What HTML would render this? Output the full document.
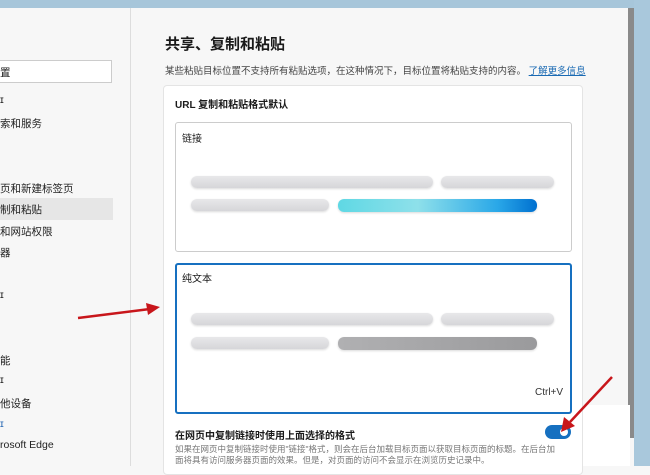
<!DOCTYPE html>
<html><head><meta charset="utf-8"><style>
*{margin:0;padding:0;box-sizing:border-box}
body{width:650px;height:466px;overflow:hidden;background:#f7f7f7;font-family:"Liberation Sans","Noto Sans CJK SC",sans-serif;position:relative;color:#1a1a1a}
.a{position:absolute}
.side{font-size:10.5px;color:#222;left:0}
.bar{position:absolute;height:12px;border-radius:6px;background:linear-gradient(#e8e8ea,#d6d6d9);box-shadow:0 1px 2px rgba(0,0,0,.15)}
</style></head><body>
<div class="a" style="left:0;top:0;width:650px;height:8px;background:#a7c6da"></div>
<div class="a" style="left:634px;top:0;width:16px;height:466px;background:#a9c8dc"></div>
<div class="a" style="left:628px;top:8px;width:6px;height:430px;background:#8a8a8a"></div>
<div class="a" style="left:130px;top:8px;width:1px;height:458px;background:#ddd"></div>
<div class="a" style="left:-2px;top:60px;width:114px;height:23px;background:#fff;border:1px solid #ccc"></div>
<div class="a side" style="top:65px">置</div>
<div class="a side" style="top:94px">ɪ</div>
<div class="a side" style="top:116px">索和服务</div>
<div class="a" style="left:0;top:198px;width:113px;height:22px;background:#e6e6e6"></div>
<div class="a side" style="top:181px">页和新建标签页</div>
<div class="a side" style="top:202px">制和粘贴</div>
<div class="a side" style="top:224px">和网站权限</div>
<div class="a side" style="top:245px">器</div>
<div class="a side" style="top:289px">ɪ</div>
<div class="a side" style="top:353px">能</div>
<div class="a side" style="top:374px">ɪ</div>
<div class="a side" style="top:396px">他设备</div>
<div class="a side" style="top:418px;color:#2a6ab5">ɪ</div>
<div class="a side" style="top:439px">rosoft Edge</div>

<div class="a" style="left:165px;top:33px;font-size:15px;font-weight:bold">共享、复制和粘贴</div>
<div class="a" style="left:165px;top:63px;font-size:9.5px;color:#444">某些粘贴目标位置不支持所有粘贴选项，在这种情况下，目标位置将粘贴支持的内容。 <span style="color:#1a6ab3;text-decoration:underline">了解更多信息</span></div>
<div class="a" style="left:163px;top:85px;width:420px;height:390px;background:#fff;border:1px solid #e4e4e4;border-radius:4px"></div>
<div class="a" style="left:175px;top:96px;font-size:10px;font-weight:bold">URL 复制和粘贴格式默认</div>
<div class="a" style="left:175px;top:122px;width:397px;height:130px;border:1px solid #ccc;border-radius:3px"></div>
<div class="a" style="left:182px;top:130px;font-size:10px">链接</div>
<div class="bar" style="left:191px;top:176px;width:242px"></div>
<div class="bar" style="left:441px;top:176px;width:113px"></div>
<div class="bar" style="left:191px;top:199px;width:138px"></div>
<div class="bar" style="left:338px;top:199px;width:199px;height:13px;background:linear-gradient(90deg,#5fd8e4,#8ee0ea 40%,#2aa8e8 80%,#0070d0)"></div>
<div class="a" style="left:175px;top:263px;width:397px;height:151px;border:2px solid #1670c0;border-radius:3px"></div>
<div class="a" style="left:182px;top:270px;font-size:10px">纯文本</div>
<div class="bar" style="left:191px;top:313px;width:242px"></div>
<div class="bar" style="left:441px;top:313px;width:113px"></div>
<div class="bar" style="left:191px;top:337px;width:138px"></div>
<div class="bar" style="left:338px;top:337px;width:199px;height:13px;background:linear-gradient(90deg,#b0b0b2,#9a9a9c)"></div>
<div class="a" style="left:535px;top:387px;font-size:10px;color:#333">Ctrl+V</div>
<div class="a" style="left:175px;top:427px;font-size:10px;font-weight:bold">在网页中复制链接时使用上面选择的格式</div>
<div class="a" style="left:545px;top:425px;width:26px;height:14px;border-radius:7px;background:#1670c0"><div style="position:absolute;right:3px;top:3px;width:8px;height:8px;border-radius:4px;background:#fff"></div></div>
<div class="a" style="left:175px;top:444px;font-size:8.5px;color:#777;line-height:11px;width:400px;white-space:nowrap;overflow:hidden">如果在网页中复制链接时使用"链接"格式，则会在后台加载目标页面以获取目标页面的标题。在后台加<br>面将具有访问服务器页面的效果。但是，对页面的访问不会显示在浏览历史记录中。</div>
<div class="a" style="left:583px;top:405px;width:47px;height:61px;background:#fff"></div>
<svg class="a" style="left:0;top:0" width="650" height="466">
<line x1="78" y1="318" x2="150" y2="309" stroke="#c8161b" stroke-width="2.5"/>
<polygon points="160,307 146,303 148,315" fill="#c8161b"/>
<line x1="612" y1="377" x2="570" y2="422" stroke="#c8161b" stroke-width="2.5"/>
<polygon points="561,432 564,417 575,426" fill="#c8161b"/>
</svg>
</body></html>
